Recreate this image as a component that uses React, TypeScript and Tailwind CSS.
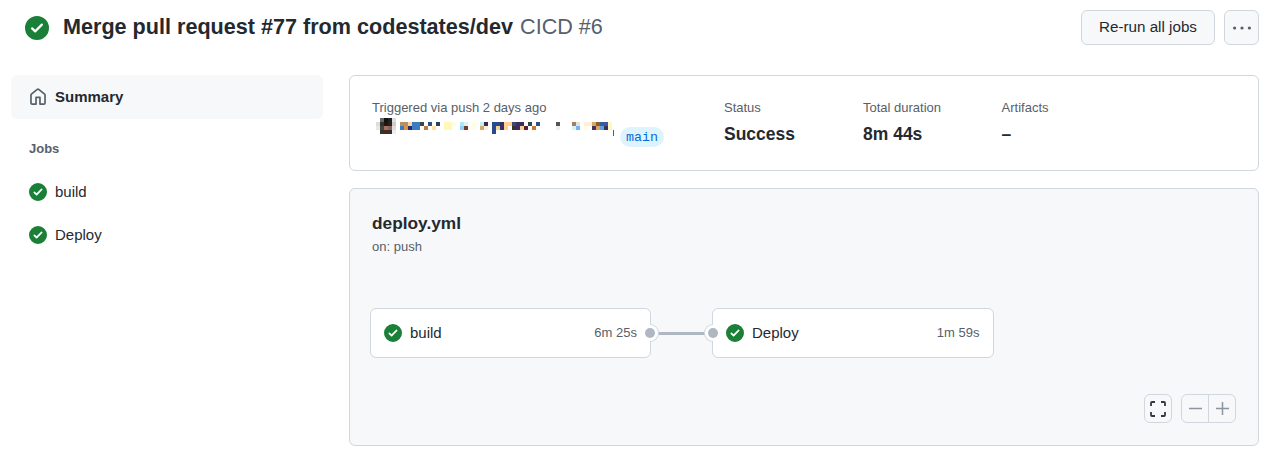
const font = 'font-["Liberation_Sans",Arial,sans-serif]'

// censored author line from the screenshot: [column, colour] per 4px row, origin x=376 y=120
const mosaicRows: [number, string][][] = [
  [[1, '#666'], [2, '#111'], [3, '#222'], [4, '#ddd']],
  [[0, '#ddd'], [1, '#333'], [2, '#201510'], [3, '#2a2020'], [4, '#ccc'],
    [6, '#b89060'], [7, '#b89060'], [8, '#f0d8a8'], [9, '#3a7cbf'], [10, '#3a7cbf'], [11, '#444'], [13, '#2f4f80'], [15, '#23425f'],
    [17, '#fff8b8'], [18, '#fff8b8'], [19, '#fffde0'], [21, '#a8e8f8'], [22, '#d8f4f8'], [24, '#fffce0'], [26, '#c0f0f0'], [27, '#3a2a50'],
    [29, '#2a4a90'], [30, '#2a4a90'], [31, '#3a3060'], [32, '#ffd090'], [33, '#ffd090'], [34, '#3a4a70'], [35, '#3a3060'], [36, '#3a3060'],
    [38, '#2a4858'], [40, '#2f5080'], [45, '#555'], [49, '#a08060'], [50, '#e8e0d0'], [52, '#ffeed8'], [53, '#ffeed8'], [54, '#d8a860'],
    [55, '#8a6030'], [56, '#3a5a9a'], [57, '#3a5a9a'], [58, '#fff8b8']],
  [[0, '#e8e8e8'], [1, '#443'], [2, '#a07060'], [3, '#906050'], [4, '#ddd'],
    [6, '#3a7cbf'], [7, '#e09040'], [8, '#2a2a70'], [9, '#3a7cbf'], [10, '#3a7cbf'], [12, '#c87830'], [14, '#ffe0a0'],
    [17, '#fff8b8'], [18, '#fff8b8'], [21, '#90d0f8'], [22, '#7a3a28'], [24, '#fffce0'], [26, '#d8a868'], [27, '#f8f0d8'],
    [29, '#2a4a90'], [30, '#f0d890'], [31, '#3a3060'], [32, '#ffd090'], [34, '#3a3030'], [35, '#3a3060'], [36, '#ffd090'], [37, '#5a2030'],
    [39, '#c87830'], [45, '#eef0f0'], [49, '#d8f4f8'], [50, '#70b8f8'], [52, '#fffce0'], [54, '#4a3060'], [55, '#d8a860'], [56, '#60a0e0'],
    [57, '#3a3060'], [58, '#fff8c0']],
  [[1, '#333'], [2, '#4a2a20'], [3, '#333'], [4, '#eee'], [29, '#2a4a90']],
]

function AuthorMosaic() {
  return (
    <svg width="240" height="20" className="block shrink-0">
      {mosaicRows.map((row, y) =>
        row.map(([x, fill]) => <rect key={`${x}-${y}`} x={x * 4} y={y * 4} width="4" height="4" fill={fill} />),
      )}
      <rect x="237" y="12" width="1" height="6" fill="#57606a" />
    </svg>
  )
}

function CheckBadge({ size = 18 }: { size?: number }) {
  return (
    <svg width={size} height={size} viewBox="0 0 16 16" className="shrink-0">
      <path
        fill="#1a7f37"
        d="M8 16A8 8 0 1 1 8 0a8 8 0 0 1 0 16Zm3.78-9.72a.751.751 0 0 0-.018-1.042.751.751 0 0 0-1.042-.018L6.75 9.19 5.28 7.72a.751.751 0 0 0-1.042.018.751.751 0 0 0-.018 1.042l2 2a.75.75 0 0 0 1.06 0Z"
      />
    </svg>
  )
}

function HomeIcon() {
  return (
    <svg width="18" height="18" viewBox="0 0 16 16" fill="#57606a" className="shrink-0">
      <path d="M6.906.664a1.749 1.749 0 0 1 2.187 0l5.25 4.2c.415.332.657.835.657 1.367v7.019A1.75 1.75 0 0 1 13.25 15h-3.5a.75.75 0 0 1-.75-.75V9H7v5.25a.75.75 0 0 1-.75.75h-3.5A1.75 1.75 0 0 1 1 13.25V6.23c0-.531.242-1.034.657-1.366l5.25-4.2Zm1.25 1.171a.25.25 0 0 0-.312 0l-5.25 4.2a.25.25 0 0 0-.094.196v7.019c0 .138.112.25.25.25H5.5V8.25a.75.75 0 0 1 .75-.75h3.5a.75.75 0 0 1 .75.75v5.25h2.75a.25.25 0 0 0 .25-.25V6.23a.25.25 0 0 0-.094-.195Z" />
    </svg>
  )
}

function JobLink({ name }: { name: string }) {
  return (
    <div className="flex h-[43px] items-center gap-2 pl-[18px] text-[15px] text-[#24292f]">
      <CheckBadge />
      <span className="pt-[2px]">{name}</span>
    </div>
  )
}

function Port({ side }: { side: 'left' | 'right' }) {
  if (side === 'right') {
    return (
      <>
        <span className="absolute right-[-9px] top-1/2 h-[18px] w-[9px] -translate-y-1/2 rounded-r-full border border-l-0 border-[#d0d7de] bg-white" />
        <span className="absolute right-[-5px] top-1/2 h-[10px] w-[10px] -translate-y-1/2 rounded-full bg-[#afb8c1]" />
      </>
    )
  }
  return (
    <>
      <span className="absolute left-[-9px] top-1/2 h-[18px] w-[9px] -translate-y-1/2 rounded-l-full border border-r-0 border-[#d0d7de] bg-white" />
      <span className="absolute left-[-5px] top-1/2 h-[10px] w-[10px] -translate-y-1/2 rounded-full bg-[#afb8c1]" />
    </>
  )
}

function JobNode({ name, time, width, port }: { name: string; time: string; width: string; port: 'left' | 'right' }) {
  return (
    <div className={`relative flex h-[50px] items-center gap-2 rounded-md border border-[#d0d7de] bg-white pl-[13px] ${width}`}>
      <CheckBadge />
      <span className="text-[15px] text-[#24292f]">{name}</span>
      <span className="ml-auto text-[13px] text-[#57606a]">{time}</span>
      <Port side={port} />
    </div>
  )
}

function Stat({ label, value, width }: { label: string; value: string; width: string }) {
  return (
    <div className={width}>
      <div className="text-[13px] leading-5 text-[#57606a]">{label}</div>
      <div className="mt-1 text-[17.5px] font-bold leading-6 text-[#24292f]">{value}</div>
    </div>
  )
}

export default function App() {
  return (
    <div className={`${font} h-[452px] w-[1265px] overflow-hidden bg-white`}>
      <header className="flex h-[75px] items-start pl-[25px] pr-[6px] pt-[10px]">
        <div className="mt-[6px]"><CheckBadge size={24} /></div>
        <h1 className="ml-[14px] mt-[3px] text-[21.6px] font-bold leading-[28px] text-[#24292f]">
          Merge pull request #77 from codestates/dev <span className="ml-px font-normal text-[#57606a]">CICD #6</span>
        </h1>
        <button className="ml-auto h-[35px] w-[134px] rounded-md border border-[#d0d7de] bg-[#f6f8fa] text-[15.2px] text-[#24292f]">Re-run all jobs</button>
        <button className="ml-[9px] flex h-[35px] w-[35px] items-center justify-center rounded-md border border-[#d0d7de] bg-[#f6f8fa]">
          <svg width="18" height="4" viewBox="0 0 18 4" fill="#57606a">
            <circle cx="1.6" cy="2" r="1.6" />
            <circle cx="9" cy="2" r="1.6" />
            <circle cx="16.4" cy="2" r="1.6" />
          </svg>
        </button>
      </header>

      <div className="flex">
        <aside className="ml-[11px] w-[312px]">
          <div className="flex h-11 items-center gap-2 rounded-md bg-[#f6f8fa] pl-[18px] text-[15px] font-bold text-[#24292f]">
            <HomeIcon />
            Summary
          </div>
          <div className="mt-[22px] pb-[13px] pl-[18px] text-[13px] font-bold leading-[16px] text-[#57606a]">Jobs</div>
          <JobLink name="build" />
          <JobLink name="Deploy" />
        </aside>

        <main className="ml-[26px] w-[910px]">
          <section className="flex h-24 rounded-md border border-[#d0d7de] px-[22px] pt-[22px]">
            <div className="w-[352px]">
              <div className="text-[13px] leading-5 text-[#57606a]">Triggered via push 2 days ago</div>
              <div className="ml-1 flex items-start">
                <AuthorMosaic />
                <span className="ml-1 mt-[9px] h-5 rounded-full bg-[#ddf4ff] px-[6px] font-['Liberation_Mono',monospace] text-[13.33px] leading-[22px] text-[#0969da]">main</span>
              </div>
            </div>
            <Stat label="Status" value="Success" width="w-[139px]" />
            <Stat label="Total duration" value="8m 44s" width="w-[138.6px]" />
            <Stat label="Artifacts" value="–" width="w-[100px]" />
          </section>

          <section className="relative mt-[17px] h-[258px] rounded-md border border-[#d0d7de] bg-[#f6f8fa] px-[22px] pt-6">
            <h2 className="text-[17.3px] font-bold leading-5 text-[#24292f]">deploy.yml</h2>
            <p className="mt-1 text-[13px] leading-5 text-[#57606a]">on: push</p>
            <div className="ml-[-2px] mt-[51px] flex items-center">
              <JobNode name="build" time="6m 25s" width="w-[281px] pr-[13px]" port="right" />
              <div className="h-[3px] w-[61px] bg-[#afb8c1]" />
              <JobNode name="Deploy" time="1m 59s" width="w-[282px] pr-[13.5px]" port="left" />
            </div>
            <div className="absolute bottom-[22px] right-[22px] flex gap-[9px]">
              <button className="flex h-[29px] w-[28px] items-center justify-center rounded-md border border-[#d0d7de] bg-[#f6f8fa]">
                <svg width="16" height="16" viewBox="0 0 16 16" fill="none" stroke="#32383f" strokeWidth="1.8">
                  <path d="M1 5V2a1 1 0 0 1 1-1h3M11 1h3a1 1 0 0 1 1 1v3M15 11v3a1 1 0 0 1-1 1h-3M5 15H2a1 1 0 0 1-1-1v-3" />
                </svg>
              </button>
              <div className="flex h-[29px] rounded-md border border-[#d0d7de]">
                <button className="flex w-[27px] items-center justify-center border-r border-[#d0d7de]">
                  <svg width="13" height="13" viewBox="0 0 13 13" stroke="#8c959f" strokeWidth="1.5"><path d="M0 6.5h13" /></svg>
                </button>
                <button className="flex w-[26px] items-center justify-center">
                  <svg width="13" height="13" viewBox="0 0 13 13" stroke="#8c959f" strokeWidth="1.5"><path d="M0 6.5h13M6.5 0v13" /></svg>
                </button>
              </div>
            </div>
          </section>
        </main>
      </div>
    </div>
  )
}
